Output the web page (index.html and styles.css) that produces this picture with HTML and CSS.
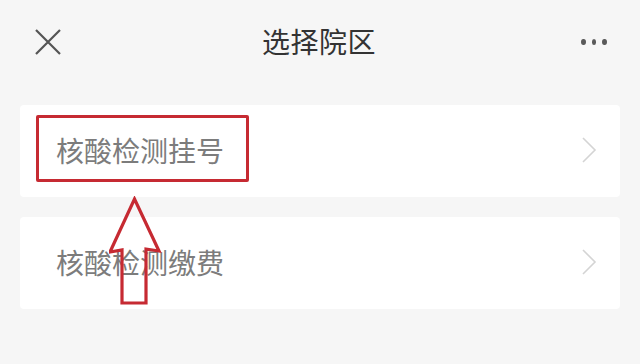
FILE: index.html
```html
<!DOCTYPE html>
<html lang="zh">
<head>
<meta charset="utf-8">
<title>选择院区</title>
<link rel="stylesheet" href="styles.css">
</head>
<body>
<div class="page">
  <header class="nav">
    <svg class="icon-close" width="26" height="26" viewBox="0 0 26 26">
      <path d="M1 1 L25 25 M25 1 L1 25" stroke="#555" stroke-width="2.2" fill="none"/>
    </svg>
    <h1 class="title">选择院区</h1>
    <div class="more"><span></span><span></span><span></span></div>
  </header>
  <main class="list">
    <div class="card">
      <span class="label">核酸检测挂号</span>
      <svg class="chev" width="16" height="26" viewBox="0 0 16 26"><path d="M2 1 L14 13 L2 25" stroke="#d4d4d4" stroke-width="1.6" fill="none"/></svg>
      <div class="mark"></div>
    </div>
    <div class="card">
      <span class="label">核酸检测缴费</span>
      <svg class="chev" width="16" height="26" viewBox="0 0 16 26"><path d="M2 1 L14 13 L2 25" stroke="#d4d4d4" stroke-width="1.6" fill="none"/></svg>
    </div>
  </main>
  <svg class="arrow" width="56" height="112" viewBox="0 0 56 112">
    <polygon points="25.5,3 50,55 37,53 37,107 13,107 13,54 1,56" fill="none" stroke="#c62a32" stroke-width="3.2" stroke-linejoin="miter"/>
  </svg>
</div>
</body>
</html>
```
FILE: styles.css
```css
* { box-sizing: border-box; }
html, body { margin: 0; padding: 0; }
body {
  background: #f6f6f6;
  font-family: "Noto Sans CJK SC", "Noto Sans", sans-serif;
  width: 640px;
  height: 364px;
  overflow: hidden;
}
.page { position: relative; width: 640px; height: 364px; }
.nav {
  height: 84px;
  display: flex;
  align-items: center;
  justify-content: space-between;
  padding: 0 33px 0 35px;
}
.icon-close { display: block; margin-top: -1px; }
.title {
  margin: 0;
  font-size: 28px;
  font-weight: 400;
  color: #333;
  letter-spacing: 0.5px;
  position: relative;
  left: -2px;
  top: -1px;
}
.more { display: flex; gap: 6px; width: 26px; }
.more span {
  width: 6px; height: 6px; border-radius: 50%;
  background: #5a5a5a;
}
.list {
  display: flex;
  flex-direction: column;
  gap: 20px;
  padding: 21px 20px 0 20px;
}
.card {
  position: relative;
  height: 92px;
  background: #fff;
  border-radius: 4px;
  display: flex;
  align-items: center;
  justify-content: space-between;
  padding: 0 23px 0 36px;
}
.label {
  font-size: 28px;
  color: #7c7c7c;
  line-height: 1;
  margin-top: -2px;
}
.chev { display: block; margin-top: -2px; }
.mark {
  position: absolute;
  left: 16px;
  top: 10px;
  width: 213px;
  height: 67px;
  border: 3.5px solid #c62a32;
  border-radius: 2px;
}
.arrow {
  position: absolute;
  left: 109px;
  top: 196px;
}
```
